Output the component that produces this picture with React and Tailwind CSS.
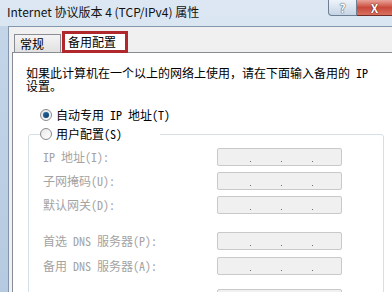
import React from "react";

const mono = "font-['Noto_Sans_Mono_CJK_SC','Noto_Sans_CJK_SC',monospace]";

const IpBox = () => (
  <div className="w-[125px] h-[18px] border border-[#c9c9c9] bg-[#f0f0f0] rounded-[2px] flex pl-[2px]">
    <div className="w-[31px] flex justify-end items-end pb-[3px]"><div className="w-[1px] h-[1px] bg-[#6d6d6d]" /></div>
    <div className="w-[31px] flex justify-end items-end pb-[3px]"><div className="w-[1px] h-[1px] bg-[#6d6d6d]" /></div>
    <div className="w-[31px] flex justify-end items-end pb-[3px]"><div className="w-[1px] h-[1px] bg-[#6d6d6d]" /></div>
  </div>
);

const Row = ({ label }) => (
  <div className="flex items-center h-[18px]">
    <span className={`w-[174px] text-[12px] leading-[14px] text-[#a3a3a3] whitespace-pre ${mono}`}>{label}</span>
    <IpBox />
  </div>
);

const Radio = ({ checked }) => (
  <div className="w-[12px] h-[12px] rounded-full border border-[#8a8a8a] bg-gradient-to-br from-[#e8e8e8] to-[#ffffff] flex items-center justify-center">
    {checked && <div className="w-[6px] h-[6px] rounded-full bg-gradient-to-br from-[#2b6fa8] to-[#0b3a66] shadow-[0_0_1px_#7fb2e0]" />}
  </div>
);

const App = () => {
  return (
    <div className="w-[392px] h-[292px] overflow-hidden flex flex-col bg-gradient-to-b from-[#dce7f3] to-[#c6d7ea] font-['Noto_Sans_CJK_SC',sans-serif] text-black select-none">
      {/* title bar */}
      <div className="h-[26px] flex items-start shrink-0">
        <span className="pl-[7px] pt-[5px] text-[12px] leading-[14px] text-[#111]">Internet 协议版本 4 (TCP/IPv4) 属性</span>
        <div className="ml-auto flex">
          <div className="w-[29px] h-[16px] rounded-bl-[4px] border border-t-0 border-[#6e7f94] bg-gradient-to-b from-[#eef3f9] to-[#c5d4e5] flex items-center justify-center text-[12px] leading-[12px] font-bold text-white [text-shadow:0_0_1px_#2c3e55,0_0_1px_#2c3e55]">?</div>
          <div className="w-[35px] h-[16px] border-b border-[#6e2c27] bg-gradient-to-b from-[#e8a49b] via-[#c9493b] to-[#d8705f] flex items-center justify-center text-[12px] leading-[12px] font-bold text-white [text-shadow:0_0_1px_#4a1410,0_0_1px_#4a1410]">X</div>
        </div>
      </div>
      {/* body */}
      <div className="flex-1 flex">
        <div className="w-[8px] bg-gradient-to-b from-[#c4d5e8] to-[#b3c8df]" />
        <div className="flex-1 flex flex-col bg-[#f0f0f0] border-l border-t border-[#8496ad] pl-[3px]">
          {/* tabs */}
          <div className="h-[25px] flex items-end pl-[2px] shrink-0">
            <div className="w-[47px] h-[18px] border border-b-0 border-[#898c95] bg-gradient-to-b from-[#f4f4f4] to-[#e1e1e1] flex items-center pl-[5px] text-[12px] leading-[14px]">常规</div>
            <div className="relative z-10 -mb-[1px] ml-[1px] w-[66px] h-[22px] border-[3px] border-[#b0282c] bg-white flex items-center pl-[3px] text-[12px] leading-[14px]">备用配置</div>
          </div>
          {/* panel */}
          <div className={`flex-1 bg-white border-l border-t border-[#898c95] flex flex-col ${mono}`}>
            <p className="pl-[13px] pt-[13px] text-[12px] leading-[13px] whitespace-pre">如果此计算机在一个以上的网络上使用，请在下面输入备用的 IP{"\n"}设置。</p>
            <div className="mt-[16px] pl-[27px] flex items-center gap-[4px] h-[14px]">
              <Radio checked />
              <span className="text-[12px] leading-[14px] whitespace-pre">自动专用 IP 地址(T)</span>
            </div>
            <fieldset className="mt-[5px] ml-[15px] w-[356px] border border-[#d5dfe5] rounded-[3px] pl-[14px]">
              <legend className="ml-[-3px] w-[120px] h-[14px] flex items-center gap-[4px]">
                <Radio />
                <span className="text-[12px] leading-[14px] whitespace-pre">用户配置(S)</span>
              </legend>
              <div className="pt-[7px] flex flex-col gap-[6px]">
                <Row label="IP 地址(I):" />
                <Row label="子网掩码(U):" />
                <Row label="默认网关(D):" />
              </div>
              <div className="pt-[18px] flex flex-col gap-[7px]">
                <Row label="首选 DNS 服务器(P):" />
                <Row label="备用 DNS 服务器(A):" />
              </div>
              <div className="pt-[14px] pb-[20px]">
                <Row label="" />
              </div>
            </fieldset>
          </div>
        </div>
      </div>
    </div>
  );
};

export default App;
